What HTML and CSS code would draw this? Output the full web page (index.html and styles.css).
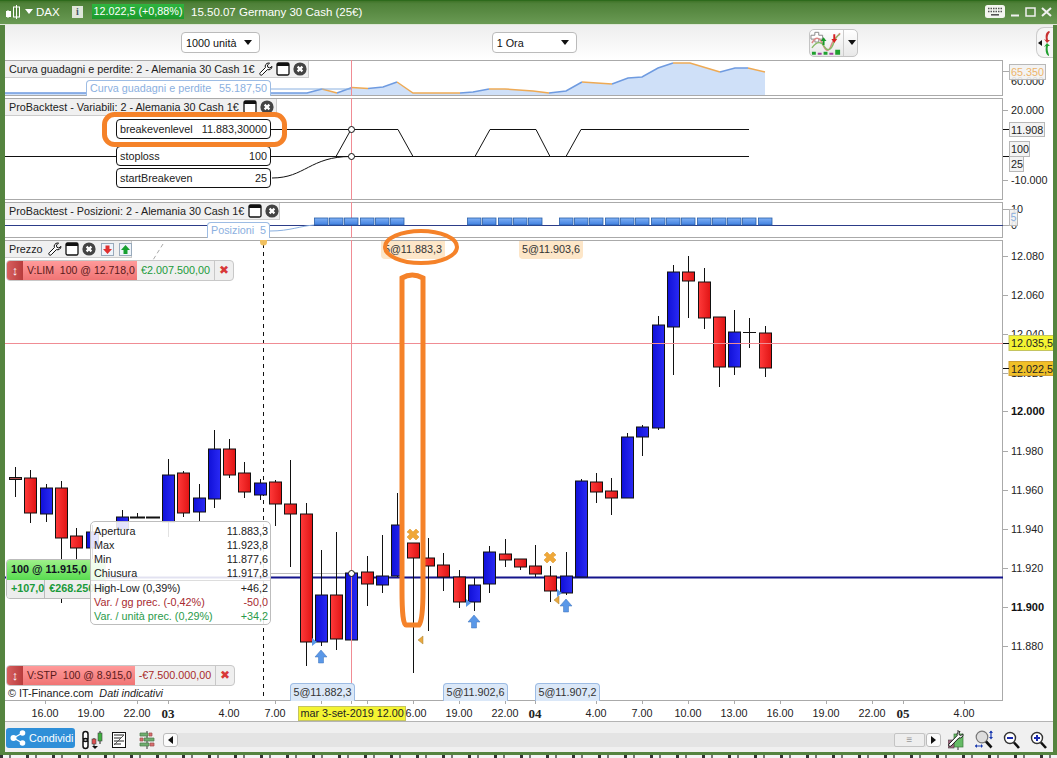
FILE: index.html
```html
<!DOCTYPE html>
<html lang="it">
<head>
<meta charset="utf-8">
<title>DAX</title>
<link rel="stylesheet" href="styles.css">
</head>
<body>
<svg class="defs" width="0" height="0" aria-hidden="true">
  <defs>
    <linearGradient id="r"><stop offset="0" stop-color="#ff3a3a"/><stop offset="1" stop-color="#e01414"/></linearGradient>
    <linearGradient id="b"><stop offset="0" stop-color="#1010d8"/><stop offset="1" stop-color="#2a2af4"/></linearGradient>
    <linearGradient id="bx" x1="0" y1="0" x2="0" y2="1"><stop offset="0" stop-color="#7fb0f4"/><stop offset="1" stop-color="#3f7fe0"/></linearGradient>
    <symbol id="wrench" viewBox="0 0 14 14"><path d="M9.6 1a3.4 3.4 0 0 0-3.2 4.6L1.2 10.8a1.4 1.4 0 0 0 2 2L8.4 7.6A3.4 3.4 0 0 0 13 4.4L10.8 6 8.8 5.2 8.4 3l2.2-1.8A3.4 3.4 0 0 0 9.6 1z" fill="#fff" stroke="#111" stroke-width="1"/></symbol>
    <symbol id="win" viewBox="0 0 14 14"><rect x="1" y="1" width="12" height="12" rx="1.5" fill="#fff" stroke="#111" stroke-width="1.3"/><rect x="1" y="1" width="12" height="3" fill="#111"/></symbol>
    <symbol id="close" viewBox="0 0 14 14"><circle cx="7" cy="7" r="6.6" fill="#444"/><path d="M4.6 4.6l4.8 4.8M9.4 4.6l-4.8 4.8" stroke="#fff" stroke-width="2.2"/></symbol>
  </defs>
</svg>
<div class="window">
  <header class="titlebar">
    <svg class="t-candle" width="16" height="16" viewBox="0 0 16 16"><path d="M3 6v8M11.5 1v14" stroke="#fff"/><rect x="1" y="7" width="5" height="6" fill="#fff"/><rect x="8.5" y="3" width="6" height="10" fill="none" stroke="#fff"/></svg>
    <span class="t-arrow"></span>
    <span class="t-name">DAX</span>
    <span class="t-info">i</span>
    <span class="t-price">12.022,5 (+0,88%)</span>
    <span class="t-text">15.50.07 Germany 30 Cash (25€)</span>
    <span class="t-right">
      <svg width="20" height="13" viewBox="0 0 20 13"><rect width="20" height="13" rx="2.5" fill="#f4f6f0"/><path d="M3 3.5h14M3 6.5h14" stroke="#555" stroke-width="1.6" stroke-dasharray="1.5 1"/><path d="M6 9.8h8" stroke="#555" stroke-width="1.6"/></svg>
      <svg width="10" height="10" viewBox="0 0 10 10"><path d="M1 8.5h8" stroke="#f0f0f0" stroke-width="2"/></svg>
      <svg width="11" height="10" viewBox="0 0 11 10"><rect x="1" y="1" width="9" height="8" fill="none" stroke="#f0f0f0" stroke-width="1.5"/></svg>
      <svg width="11" height="10" viewBox="0 0 11 10"><path d="M1 1l9 8M10 1l-9 8" stroke="#f0f0f0" stroke-width="2"/></svg>
    </span>
  </header>

  <main class="content">
    <div class="toolbar">
      <div class="select sel-units"><span>1000 unità</span><i class="caret"></i></div>
      <div class="select sel-tf"><span>1 Ora</span><i class="caret"></i></div>
      <div class="chartbtn">
        <svg width="34" height="26" viewBox="0 0 34 26">
          <path d="M5 2h4v3h4v4H9v3H5V9H1V5h4z" fill="#fff" stroke="#888"/>
          <path d="M2 13c5-9 9-4 12 3s6 5 8-1 6-9 9-12" fill="none" stroke="#d88"  stroke-width="1.6"/>
          <path d="M2 18c6-8 10-6 13-1s7 3 9-3 5-9 7-10" fill="none" stroke="#8b6" stroke-width="1.4"/>
          <path d="M13 15v-4h-2l3-4 3 4h-2v4z" fill="#1a9a2a"/><path d="M24 4v5h-2l3 4 3-4h-2V4z" fill="#d82020"/>
          <path d="M2 22h4v3H2zM14 22h4v3h-4zM26 20h5v5h-5z" fill="#20a030"/><path d="M8 23h4v2H8zM20 23h4v2h-4z" fill="#a040a0"/>
        </svg>
        <i class="caret caret-btn"></i>
      </div>
      <div class="sidetab">
        <svg width="14" height="30" viewBox="0 0 14 30"><path d="M1 15l4-3v6z" fill="#111"/><path d="M12 3c-3 1-4 4-3 9l-2-1 3 4 3-3-2 0c-1-3 0-6 2-8z" fill="#c83030"/><path d="M12 28c-3-1-4-5-3-10l-2 1 3-4 3 3-2 0c-1 3 0 6 1 9z" fill="#20a030"/></svg>
      </div>
    </div>

    <section class="panel panel-curve">
      <div class="plot">
        <svg class="canvas" width="998" height="36" viewBox="5 60 998 36">
          <path class="area" d="M5 95V93H307L322 89 337 93 352 87.500 368 88.500 383 87 397 82 413 93H460L473 92 489 89H505L533 91 549 93 566 91 582 82 612 84 628 78 642 77 658 68 673 63H690L720 72 735 68H748L765 72V95z"/>
          <path class="ln-blue" d="M5 93H307L322 89M337 93 352 87.500M368 88.500 383 87 397 82M460 93 473 92 489 89M549 93 566 91 582 82M612 84 628 78 642 77 658 68 673 63M720 72 735 68H748"/>
          <path class="ln-orange" d="M322 89 337 93M352 87.500 368 88.500M397 82 413 93H460M489 89H505L533 91 549 93M582 82 612 84M673 63H690L720 72M748 68 765 72"/>
          <path class="ln-thin" d="M271 89H352"/>
          <path class="cross" d="M351.500 60V96"/>
        </svg>
        <div class="head head-curve"><span>Curva guadagni e perdite: 2 - Alemania 30 Cash 1€</span>
          <svg class="ic"><use href="#wrench"/></svg><svg class="ic"><use href="#win"/></svg><svg class="ic"><use href="#close"/></svg></div>
        <div class="legend legend-curve"><span>Curva guadagni e perdite</span><span>55.187,50</span></div>
      </div>
      <div class="axis">
        <svg class="canvas" width="50" height="36" viewBox="1003 60 50 36">
          <text class="ax" x="1011" y="85">60.000</text>
          <path class="tick" d="M1003 71.500H1009"/>
          <rect class="boxl" x="1009.500" y="64.500" width="36" height="15"/>
          <text class="ax ax-o" x="1011" y="76">65.350</text>
        </svg>
      </div>
    </section>

    <section class="panel panel-vars">
      <div class="plot">
        <svg class="canvas" width="998" height="102" viewBox="5 98 998 102">
          <path class="cross" d="M351.500 98V200"/>
          <path class="ln-black" d="M5 156.500H749M270 129.500H398L413 156.500M475 156.500L490 129.500H536L550 156.500M566 156.500L581 129.500H749M336 156.500L351 129.500M272 178C305 178 310 156.500 351 156.500"/>
          <circle class="dot" cx="351.500" cy="129.500" r="3"/>
          <circle class="dot" cx="351.500" cy="156.500" r="3"/>
        </svg>
        <div class="head head-vars"><span>ProBacktest - Variabili: 2 - Alemania 30 Cash 1€</span>
          <svg class="ic"><use href="#win"/></svg><svg class="ic"><use href="#close"/></svg></div>
        <div class="var var-1"><span>breakevenlevel</span><span>11.883,30000</span></div>
        <div class="var var-2"><span>stoploss</span><span>100</span></div>
        <div class="var var-3"><span>startBreakeven</span><span>25</span></div>
      </div>
      <div class="axis">
        <svg class="canvas" width="50" height="102" viewBox="1003 98 50 102">
          <path class="tick" d="M1003 110.500H1008M1003 180.500H1008"/>
          <path class="tick-k" d="M1003 129.500H1009M1003 156.500H1009"/>
          <text class="ax" x="1011" y="114">20.000</text>
          <text class="ax" x="1011" y="184">-10.000</text>
          <rect class="boxl" x="1009.500" y="122.500" width="35" height="14"/>
          <text class="ax" x="1011" y="133.500">11.908</text>
          <rect class="boxl" x="1009.500" y="141.500" width="20" height="15"/>
          <text class="ax" x="1011" y="153">100</text>
          <rect class="boxl" x="1009.500" y="156.500" width="14" height="15"/>
          <text class="ax" x="1011" y="168">25</text>
        </svg>
      </div>
    </section>

    <section class="panel panel-pos">
      <div class="plot">
        <svg class="canvas" width="998" height="36" viewBox="5 202 998 36">
          <path class="cross" d="M351.500 202V238"/>
          <path class="ln-navy" d="M5 225.500H1003"/>
          <path class="ln-lb" d="M270 231C290 231 300 226 314 225"/>
          <g class="boxes" fill="url(#bx)">
            <rect x="314.500" y="218" width="13.500" height="7"/><rect x="329.500" y="218" width="13.500" height="7"/><rect x="344.500" y="218" width="13.500" height="7"/><rect x="360.500" y="218" width="13.500" height="7"/><rect x="375.500" y="218" width="13.500" height="7"/><rect x="390.500" y="218" width="13.500" height="7"/>
            <rect x="467.500" y="218" width="13.500" height="7"/><rect x="482.500" y="218" width="13.500" height="7"/><rect x="498.500" y="218" width="13.500" height="7"/><rect x="513.500" y="218" width="13.500" height="7"/><rect x="528.500" y="218" width="13.500" height="7"/>
            <rect x="559.500" y="218" width="13.500" height="7"/><rect x="574.500" y="218" width="13.500" height="7"/><rect x="589.500" y="218" width="13.500" height="7"/><rect x="605.500" y="218" width="13.500" height="7"/><rect x="620.500" y="218" width="13.500" height="7"/><rect x="635.500" y="218" width="13.500" height="7"/><rect x="651.500" y="218" width="13.500" height="7"/><rect x="666.500" y="218" width="13.500" height="7"/><rect x="681.500" y="218" width="13.500" height="7"/><rect x="697.500" y="218" width="13.500" height="7"/><rect x="712.500" y="218" width="13.500" height="7"/><rect x="727.500" y="218" width="13.500" height="7"/><rect x="742.500" y="218" width="13.500" height="7"/><rect x="758.500" y="218" width="13.500" height="7"/>
          </g>
        </svg>
        <div class="head head-pos"><span>ProBacktest - Posizioni: 2 - Alemania 30 Cash 1€</span>
          <svg class="ic"><use href="#win"/></svg><svg class="ic"><use href="#close"/></svg></div>
        <div class="legend legend-pos"><span>Posizioni</span><span>5</span></div>
      </div>
      <div class="axis">
        <svg class="canvas" width="50" height="36" viewBox="1003 202 50 36">
          <text class="ax" x="1011" y="213">10</text>
          <text class="ax" x="1011" y="229">0</text>
          <path class="tick" d="M1003 209.500H1009M1003 225.500H1009"/>
          <rect class="boxl" x="1009.500" y="209.500" width="8" height="16"/>
          <text class="ax ax-b" x="1010.500" y="221">5</text>
        </svg>
      </div>
    </section>

    <section class="panel panel-price">
      <div class="plot">
        <svg class="canvas" width="998" height="461" viewBox="5 240 998 461">
          <path class="dash-o" d="M163 244L153 260"/>
          <path class="dash-k" d="M263.500 244V700"/>
          <path class="ln-level" d="M5 577.500H1003"/>
          <path class="ln-gray" d="M270 573.500H351"/>
          <path class="wick" d="M15.500 467V497M30.500 470V523M46.500 484V522M61.500 481V603M76.500 528V559M92.500 525V560M122.500 510V520M137.500 513V518M168.500 459V537M183.500 471V517M199.500 484V521M214.500 430V508M229.500 439V478M244.500 462V498M260.500 479V500M275.500 480V526M290.500 460V567M306.500 503V666M321.500 550V646M336.500 532V650M351.500 562V652M367.500 556V606M382.500 535V593M397.500 493V577M413.500 543V673M428.500 538V631M443.500 553V591M459.500 570V608M474.500 578V611M489.500 546V593M505.500 539V567M520.500 559V570M535.500 545V577M550.500 566V602M566.500 552V595M581.500 479V577M596.500 473V503M611.500 478V515M627.500 433V498M642.500 425V456M658.500 316V430M673.500 265V375M688.500 256V318M704.500 268V329M719.500 317V387M734.500 310V375M749.500 318V348M765.500 326V377M743 332.500H756"/>
          <path class="flat" d="M130 517.500H145M146 517.500H160"/>
          <g class="body" fill="url(#r)">
            <rect x="24.500" y="478" width="12" height="35"/><rect x="55.500" y="488" width="12" height="50"/><rect x="70.500" y="536" width="12" height="12"/><rect x="177.500" y="473" width="12" height="40"/><rect x="223.500" y="449" width="12" height="26"/><rect x="238.500" y="473" width="12" height="19"/><rect x="269.500" y="482" width="12" height="22"/><rect x="284.500" y="504" width="12" height="10"/><rect x="300.500" y="514" width="12" height="128"/><rect x="330.500" y="595" width="12" height="44"/><rect x="361.500" y="572" width="12" height="12"/><rect x="407.500" y="543" width="12" height="15"/><rect x="422.500" y="558" width="12" height="8"/><rect x="437.500" y="565" width="12" height="12"/><rect x="453.500" y="577" width="12" height="25"/><rect x="499.500" y="554" width="12" height="6"/><rect x="514.500" y="559" width="12" height="8"/><rect x="529.500" y="566" width="12" height="8"/><rect x="544.500" y="576" width="12" height="15"/><rect x="590.500" y="482" width="12" height="10"/><rect x="605.500" y="491" width="12" height="7"/><rect x="682.500" y="272" width="12" height="9"/><rect x="698.500" y="282" width="12" height="36"/><rect x="713.500" y="317" width="12" height="50"/><rect x="759.500" y="333" width="12" height="35"/>
          </g>
          <rect class="body-doji" x="9.500" y="477.500" width="12" height="2"/>
          <g class="body" fill="url(#b)">
            <rect x="40.500" y="488" width="12" height="26"/><rect x="86.500" y="532" width="12" height="16"/><rect x="116.500" y="517" width="12" height="12"/><rect x="162.500" y="475" width="12" height="47"/><rect x="193.500" y="498" width="12" height="14"/><rect x="208.500" y="449" width="12" height="50"/><rect x="254.500" y="483" width="12" height="12"/><rect x="315.500" y="595" width="12" height="47"/><rect x="345.500" y="573" width="12" height="67"/><rect x="376.500" y="576" width="12" height="9"/><rect x="391.500" y="525" width="12" height="51"/><rect x="468.500" y="585" width="12" height="17"/><rect x="483.500" y="552" width="12" height="32"/><rect x="560.500" y="576" width="12" height="17"/><rect x="575.500" y="481" width="12" height="96"/><rect x="621.500" y="437" width="12" height="61"/><rect x="636.500" y="427" width="12" height="10"/><rect x="652.500" y="325" width="12" height="103"/><rect x="667.500" y="272" width="12" height="55"/><rect x="728.500" y="332" width="12" height="35"/>
          </g>
          <path class="cross" d="M351.500 240V700M5 343.500H1003"/>
          <circle class="dot" cx="351.500" cy="573.500" r="3"/>
          <path class="m-up" d="M321 650l6 7h-3.500v6h-5v-6H315zM474 615l6 7h-3.500v6h-5v-6H468zM566 599l6 7h-3.500v6h-5v-6H560z"/>
          <path class="m-x" d="M410 529l3 3 3-3 3 3-3 2 3 3-3 3-3-3-3 3-3-3 3-3-3-2zM547 552l3 3 3-3 3 3-3 2 3 3-3 3-3-3-3 3-3-3 3-3-3-2z"/>
          <path class="m-tri-b" d="M312 638l5 4-5 4zM466 599l5 4-5 4zM557 589l5 4-5 4z"/>
          <path class="m-tri-o" d="M423 636l-5 4 5 4zM559 596l-5 4 5 4z"/>
          <path class="m-pin" d="M260 240h7v2a3.500 3.500 0 0 1-7 0z"/>
        </svg>
        <div class="head head-price"><span>Prezzo</span>
          <svg class="ic"><use href="#wrench"/></svg><svg class="ic"><use href="#win"/></svg><svg class="ic"><use href="#close"/></svg>
          <svg class="ic-sq" viewBox="0 0 13 13"><rect x=".5" y=".5" width="12" height="12" fill="#eef4fb" stroke="#9ab"/><path d="M4.500 2.500h4v3.500H11l-4.500 5L2 6h2.500z" fill="#e03030"/></svg>
          <svg class="ic-sq" viewBox="0 0 13 13"><rect x=".5" y=".5" width="12" height="12" fill="#eef4fb" stroke="#9ab"/><path d="M4.500 11h4V7H11L6.500 2 2 7h2.500z" fill="#16a030"/></svg>
        </div>

        <div class="order order-lim"><span class="o-grip">↕</span><span class="o-main o-main-lim">V:LIM&nbsp; 100 @ 12.718,0</span><span class="o-val o-val-g">€2.007.500,00</span><span class="o-x">✖</span></div>
        <div class="order order-stp"><span class="o-grip">↕</span><span class="o-main o-main-stp">V:STP&nbsp; 100 @ 8.915,0</span><span class="o-val o-val-r">-€7.500.000,00</span><span class="o-x">✖</span></div>

        <div class="pos-tag">
          <div class="pos-head">100 @ 11.915,0</div>
          <div class="pos-row"><span>+107,0</span><span>€268.250,00</span></div>
        </div>

        <div class="tip">
          <div class="tip-row"><span>Apertura</span><span>11.883,3</span></div>
          <div class="tip-row"><span>Max</span><span>11.923,8</span></div>
          <div class="tip-row"><span>Min</span><span>11.877,6</span></div>
          <div class="tip-row"><span>Chiusura</span><span>11.917,8</span></div>
          <div class="tip-sep"></div>
          <div class="tip-row"><span>High-Low (0,39%)</span><span>+46,2</span></div>
          <div class="tip-row tip-red"><span>Var. / gg prec. (-0,42%)</span><span>-50,0</span></div>
          <div class="tip-row tip-green"><span>Var. / unità prec. (0,29%)</span><span>+34,2</span></div>
        </div>

        <div class="mark-top mark-1">5@11.883,3</div>
        <div class="mark-top mark-2">5@11.903,6</div>
        <div class="mark-bot mark-3">5@11.882,3</div>
        <div class="mark-bot mark-4">5@11.902,6</div>
        <div class="mark-bot mark-5">5@11.907,2</div>
        <div class="copyright">© IT-Finance.com&nbsp; <em>Dati indicativi</em></div>
      </div>
      <div class="axis">
        <svg class="canvas" width="50" height="461" viewBox="1003 240 50 461">
          <path class="tick" d="M1003 256.500H1008M1003 295.500H1008M1003 334.500H1008M1003 373.500H1008M1003 411.500H1008M1003 451.500H1008M1003 490.500H1008M1003 529.500H1008M1003 568.500H1008M1003 607.500H1008M1003 646.500H1008"/>
          <text class="ax" x="1011" y="260">12.080</text>
          <text class="ax" x="1011" y="299">12.060</text>
          <text class="ax" x="1011" y="338">12.040</text>
          <text class="ax" x="1011" y="377">12.020</text>
          <text class="ax ax-strong" x="1011" y="415">12.000</text>
          <text class="ax" x="1011" y="455">11.980</text>
          <text class="ax" x="1011" y="494">11.960</text>
          <text class="ax" x="1011" y="533">11.940</text>
          <text class="ax" x="1011" y="572">11.920</text>
          <text class="ax ax-strong" x="1011" y="611">11.900</text>
          <text class="ax" x="1011" y="650">11.880</text>
          <rect class="b-cross" x="1009" y="335.500" width="46" height="15"/>
          <text class="ax" x="1011" y="347">12.035,5</text>
          <rect class="b-last" x="1009" y="361.500" width="46" height="14"/>
          <text class="ax" x="1011" y="372.500">12.022,5</text>
          <path class="tick-k" d="M1003 343.500H1009M1003 368.500H1009"/>
        </svg>
      </div>
    </section>

    <div class="xaxis">
      <svg class="canvas-x" width="1048" height="21" viewBox="5 701 1048 21">
        <path class="tick" d="M45.500 701V704M91.500 701V704M137.500 701V704M168.500 701V704M229.500 701V704M275.500 701V704M321.500 701V704M351.500 701V704M367.500 701V704M413.500 701V704M459.500 701V704M505.500 701V704M535.500 701V704M596.500 701V704M642.500 701V704M688.500 701V704M734.500 701V704M780.500 701V704M826.500 701V704M872.500 701V704M903.500 701V704M964.500 701V704"/>
        <g class="xl">
          <text x="45" y="717">16.00</text><text x="91" y="717">19.00</text><text x="137" y="717">22.00</text><text class="xl-day" x="168" y="718">03</text><text x="229" y="717">4.00</text><text x="275" y="717">7.00</text>
          <text x="413" y="717">16.00</text><text x="459" y="717">19.00</text><text x="505" y="717">22.00</text><text class="xl-day" x="535" y="718">04</text><text x="596" y="717">4.00</text><text x="642" y="717">7.00</text><text x="688" y="717">10.00</text><text x="734" y="717">13.00</text><text x="780" y="717">16.00</text><text x="826" y="717">19.00</text><text x="872" y="717">22.00</text><text class="xl-day" x="903" y="718">05</text><text x="964" y="717">4.00</text>
        </g>
        <rect class="b-cross" x="298.500" y="706.500" width="107" height="14"/>
        <text class="ax" x="300.500" y="717">mar 3-set-2019 12.00</text>
      </svg>
    </div>

    <div class="bottombar">
      <button class="share"><svg width="16" height="16" viewBox="0 0 16 16"><circle cx="3.500" cy="8" r="3" fill="#fff"/><circle cx="12.500" cy="3" r="2.800" fill="#fff"/><circle cx="12.500" cy="13" r="2.800" fill="#fff"/><path d="M3.500 8l9-5M3.500 8l9 5" stroke="#fff" stroke-width="1.400"/></svg><span>Condividi</span></button>
      <svg class="b1" width="24" height="20" viewBox="0 0 24 20">
        <path d="M3 4a2.500 2.500 0 0 1 5 0v5a2.500 2.500 0 0 1-5 0zM3 11a2.500 2.500 0 0 1 5 0v5a2.500 2.500 0 0 1-5 0z" fill="#fff" stroke="#111" stroke-width="1.500"/>
        <path d="M14 8v8M20 1v13" stroke="#222"/><rect x="12" y="9" width="4" height="5" fill="#e05050" stroke="#444" stroke-width=".6"/><rect x="18" y="3" width="4" height="8" fill="#40b040" stroke="#444" stroke-width=".6"/><path d="M12 16l3 3 3-3z" fill="#111"/>
      </svg>
      <svg class="b2" width="14" height="16" viewBox="0 0 14 16"><rect x=".5" y=".5" width="13" height="15" fill="#fff" stroke="#111"/><path d="M2 3h10M2 6h7M2 9h10M2 12h7" stroke="#222" stroke-width="1.200"/><path d="M2 13L12 3" stroke="#555"/></svg>
      <svg class="b3" width="16" height="18" viewBox="0 0 16 18"><path d="M8 0v18" stroke="#333"/><path d="M1 2h8v3H1zM5 7h10v3H5zM1 12h9v3H1z" fill="#6fae6f" stroke="#4a7a4a" stroke-width=".7"/><path d="M10 2h3v3h-3zM1 7h3v3H1zM11 12h4v3h-4z" fill="#d87070" stroke="#a04a4a" stroke-width=".7"/></svg>
      <div class="scroll">
        <span class="s-btn"><i class="tri-l"></i></span>
        <span class="s-track"><span class="s-thumb">≡</span></span>
        <span class="s-btn"><i class="tri-r"></i></span>
      </div>
      <svg class="b4" width="16" height="20" viewBox="0 0 16 20"><path d="M10 0v20" stroke="#333"/><rect x="6" y="4" width="9" height="13" fill="#66bb66" stroke="#3a7a3a" stroke-width=".7"/><rect x="0" y="10" width="6" height="8" fill="#a06a80" stroke="#444" stroke-width=".6"/><path d="M12 1.500a3 3 0 0 0-2.800 4L1 14a1.300 1.300 0 0 0 2 2l8-8.200a3 3 0 0 0 3.800-3.800l-2 1.500-1.600-.7-.2-1.800z" fill="#fff" stroke="#222"/></svg>
      <svg class="b5" width="18" height="20" viewBox="0 0 18 20"><circle cx="7" cy="7" r="5.800" fill="#ddd" stroke="#777" stroke-width="1.200"/><path d="M11 11.500l5.500 6" stroke="#111" stroke-width="2.600"/><path d="M16 1v7M0 16h7" stroke="#1a3ab0" stroke-width="1.200"/><path d="M14 3l2-2.500L18 3zM14 7l2 2.500L18 7zM2 14l-2 2 2 2zM6 14l2 2-2 2z" fill="#1a3ab0"/></svg>
      <svg class="b6" width="17" height="18" viewBox="0 0 17 18"><circle cx="7" cy="7" r="5.500" fill="#fff" stroke="#333" stroke-width="1.400"/><path d="M11 11.500l5 5.500" stroke="#111" stroke-width="2.600"/><path d="M4 7h6" stroke="#1a2ab0" stroke-width="2"/></svg>
      <svg class="b6" width="17" height="18" viewBox="0 0 17 18"><circle cx="7" cy="7" r="5.500" fill="#fff" stroke="#333" stroke-width="1.400"/><path d="M11 11.500l5 5.500" stroke="#111" stroke-width="2.600"/><path d="M4 7h6M7 4v6" stroke="#1a2ab0" stroke-width="2"/></svg>
    </div>
  </main>
  <div class="bottomstrip"></div>

  <svg class="notes" width="1057" height="758" viewBox="0 0 1057 758" aria-hidden="true">
    <rect x="104.500" y="114.500" width="180" height="30" rx="10"/>
    <ellipse cx="421" cy="247" rx="36" ry="16"/>
    <path d="M402 278V590Q402 625 406 625H419Q423 620 423 590V278Q412 272 402 278z"/>
  </svg>
</div>
</body>
</html>
```

FILE: styles.css
```css
* { box-sizing: border-box; }
html, body { margin: 0; padding: 0; }
body { background: #fff; font-family: "Liberation Sans", Arial, sans-serif; font-size: 10.800px; color: #222; overflow: hidden; }
.defs { position: absolute; }

.window { position: relative; width: 1057px; height: 758px; display: flex; flex-direction: column; overflow: hidden; background: #55843f; }

/* title bar */
.titlebar { height: 25px; flex: none; display: flex; align-items: center; padding: 0 5px 2px 5px; color: #fff; font-size: 11.500px; background: linear-gradient(#3f7428, #4f8139 12%, #6a9a54); border-top: 1px solid #2d6a1c; border-bottom: 1px solid #dfe8d8; }
.t-candle { flex: none; }
.t-arrow { margin-left: 4px; border: 4px solid transparent; border-top: 5px solid #fff; border-bottom: 0; }
.t-name { margin-left: 3px; width: 36px; }
.t-info { width: 11px; height: 12px; background: #dfe6da; color: #456; font: bold 10px/12px "Liberation Serif", serif; text-align: center; }
.t-price { margin-left: 9px; width: 92px; height: 15px; font-size: 10.800px; line-height: 15px; background: linear-gradient(#2fb53f, #1c9a2c); text-align: center; white-space: nowrap; }
.t-text { margin-left: 7px; white-space: nowrap; }
.t-right { margin-left: auto; display: flex; align-items: center; gap: 5px; }

/* content */
.content { flex: none; width: 1048px; margin-left: 5px; background: #fff; display: flex; flex-direction: column; }

.toolbar { height: 35px; flex: none; display: flex; align-items: center; background: linear-gradient(#eee, #fff); }
.select { height: 21px; display: flex; align-items: center; justify-content: space-between; padding: 0 7px 0 4px; background: #fff; border: 1px solid #bbb; border-radius: 4px; color: #111; }
.sel-units { width: 79px; margin-left: 176px; }
.sel-tf { width: 86px; margin-left: 232px; }
.caret { width: 0; height: 0; border: 4.500px solid transparent; border-top: 5px solid #111; border-bottom: 0; }
.chartbtn { width: 49px; height: 28px; margin-left: 232px; display: flex; align-items: center; border: 1px solid #c4c4c4; border-radius: 5px; background: linear-gradient(#fff, #e8e8e8); }
.chartbtn svg { border-right: 1px solid #ccc; flex: none; }
.caret-btn { margin-left: 4px; }
.sidetab { width: 17px; height: 31px; margin-left: 178px; border: 1px solid #ccc; border-right: 0; border-radius: 8px 0 0 8px; background: #f6f6f6; }
.sidetab svg { display: block; }

.panel { display: grid; grid-template-columns: 998px 50px; flex: none; margin-bottom: 2px; }
.panel-curve { height: 36px; }
.panel-vars { height: 102px; }
.panel-pos { height: 36px; }
.panel-price { height: 461px; margin-bottom: 0; }
.plot { position: relative; overflow: hidden; box-shadow: inset -1px 0 #aaa, inset 0 1px #aaa, inset 0 -1px #aaa; }
.axis { position: relative; overflow: hidden; }
.canvas { position: absolute; left: 0; top: 0; display: block; }

/* svg strokes */
.ln-blue, .ln-orange, .ln-thin, .cross, .ln-black, .ln-navy, .ln-lb, .dash-o, .dash-k, .ln-level, .ln-gray, .wick, .flat, .tick, .tick-k { fill: none; }
.area { fill: #cfe0f8; }
.ln-blue { stroke: #6f9be0; stroke-width: 1.500; }
.ln-orange { stroke: #eeaa55; stroke-width: 1.500; }
.ln-thin { stroke: #8ab0e0; stroke-width: 1; }
.cross { stroke: #f08c94; stroke-width: 1; }
.ln-black { stroke: #111; stroke-width: 1; }
.dot { fill: #fff; stroke: #111; stroke-width: 1; }
.ln-navy { stroke: #2c3c88; stroke-width: 1; }
.ln-lb { stroke: #8ab0e0; stroke-width: 1; }
.boxes rect { stroke: #2a5fa8; stroke-width: .8; }
.dash-o { stroke: #aaa; stroke-width: 1; stroke-dasharray: 4 3; }
.dash-k { stroke: #111; stroke-width: 1; stroke-dasharray: 4 4; }
.ln-level { stroke: #14148c; stroke-width: 2; }
.ln-gray { stroke: #bbb; stroke-width: 1; }
.wick { stroke: #111; stroke-width: 1; }
.flat { stroke: #111; stroke-width: 2; }
.body rect { stroke: #111; stroke-width: 1; }
.body-doji { fill: #b05050; stroke: #111; stroke-width: 1; }
.m-up { fill: #5a98e8; stroke: #3c70b8; stroke-width: .5; }
.m-x { fill: #f0a838; stroke: #d89020; stroke-width: .5; }
.m-tri-b { fill: #5a98e8; }
.m-tri-o { fill: #e8a840; stroke: #a88030; stroke-width: .5; }
.m-pin { fill: #f0c060; }
.tick { stroke: #aaa; stroke-width: 1; }
.tick-k { stroke: #111; stroke-width: 1; }
.ax { font-family: "Liberation Sans", Arial, sans-serif; font-size: 10.800px; fill: #222; }
.ax-strong { font-size: 11px; font-weight: bold; fill: #111; }
.ax-o { fill: #edb46a; }
.ax-b { fill: #8aaedc; }
.boxl { fill: #f2f2f2; stroke: #b8b8b8; stroke-width: 1; fill-opacity: .9; }
.b-cross { fill: #f4f432; stroke: #c4c460; stroke-width: 1; }
.b-last { fill: #f0c028; stroke: #d0a030; stroke-width: 1; }
.xl text { font-family: "Liberation Sans", Arial, sans-serif; font-size: 10.800px; fill: #222; text-anchor: middle; }
.xl .xl-day { font-family: "Liberation Serif", serif; font-size: 13px; font-weight: bold; }

/* panel headers */
.head { position: absolute; left: 0; top: 1px; height: 17px; display: flex; align-items: center; gap: 3px; padding-left: 4px; background: #f0f0f0; border: 1px solid #ccc; border-left: 0; border-top: 0; color: #222; white-space: nowrap; }
.head-curve { width: 304px; }
.head-vars { width: 272px; }
.head-pos { width: 275px; }
.head-price { width: 127px; gap: 3px; }
.head span { margin-right: 1px; }
.head-price span { margin-right: 2px; }
.ic { width: 14px; height: 14px; flex: none; }
.ic-sq { width: 13px; height: 13px; flex: none; margin-left: 2px; }

/* legend boxes */
.legend { position: absolute; display: flex; justify-content: space-between; background: #fff; color: #8bb0e0; border: 1px solid #9dbce4; border-bottom: 0; border-radius: 4px 4px 0 0; padding: 0 3px; line-height: 15px; white-space: nowrap; }
.legend-curve { left: 81px; top: 20px; width: 185px; height: 16px; }
.legend-pos { left: 202px; top: 20px; width: 63px; height: 16px; }

.var { position: absolute; left: 111px; width: 155px; height: 20px; display: flex; justify-content: space-between; align-items: center; padding: 0 3px; background: #fff; border: 1px solid #111; border-radius: 4px; color: #222; }
.var-1 { top: 21px; }
.var-2 { top: 48px; }
.var-3 { top: 70px; }

/* orders */
.order { position: absolute; left: 1px; height: 21px; display: flex; align-items: stretch; font-size: 10.500px; line-height: 19px; white-space: nowrap; border: 1px solid #c8c8c8; border-radius: 4px; overflow: hidden; background: #efefef; }
.order-lim { top: 20px; width: 228px; }
.order-stp { top: 425px; width: 229px; }
.o-grip { width: 16px; background: linear-gradient(90deg, #d86060, #b83c3c); color: #fff; font-weight: bold; text-align: center; font-size: 13px; flex: none; }
.o-main { background: linear-gradient(#ff9a9a, #f07474); color: #5a1a1a; padding-left: 4px; flex: none; }
.o-main-lim { width: 114px; }
.o-main-stp { width: 112px; }
.o-val { flex: none; text-align: center; border-right: 1px solid #c8c8c8; font-size: 10.800px; }
.o-main-lim + .o-val { width: 78px; }
.o-main-stp + .o-val { width: 81px; }
.o-val-g { color: #1a9a3a; }
.o-val-r { color: #a82a2a; }
.o-x { flex: 1; text-align: center; color: #d83838; font-size: 12px; }

.pos-tag { position: absolute; left: 1px; top: 319px; width: 100px; border: 1px solid #bbb; border-radius: 4px; overflow: hidden; white-space: nowrap; }
.pos-head { height: 20px; line-height: 19px; padding-left: 4px; background: linear-gradient(#9ef08a, #58dc50); font-weight: bold; color: #112; }
.pos-row { height: 18px; line-height: 17px; background: #ededed; color: #1a9a3a; display: flex; font-weight: bold; }
.pos-row span:first-child { width: 42px; padding-left: 4px; border-right: 1px solid #bbb; }
.pos-row span:last-child { padding-left: 4px; }

.tip { position: absolute; left: 85px; top: 281px; width: 181px; height: 104px; padding: 2px 2px 0 3px; background: rgba(255,255,255,.88); border: 1px solid #bdbdbd; border-radius: 5px; }
.tip-row { display: flex; justify-content: space-between; height: 14px; line-height: 14px; color: #222; white-space: nowrap; }
.tip-sep { height: 1px; margin: 0 -2px 0 -3px; background: #ddd; }
.tip-red { color: #a82a30; }
.tip-green { color: #2a9a4a; }

.mark-top, .mark-bot { position: absolute; height: 18px; line-height: 17px; text-align: center; white-space: nowrap; color: #333; }
.mark-top { top: 1px; width: 64px; background: #fde6c8; border-radius: 0 0 4px 4px; }
.mark-1 { left: 376px; }
.mark-2 { left: 514px; }
.mark-bot { top: 443px; width: 65px; background: #dbe8f8; border: 1px solid #9dbce4; border-bottom: 0; border-radius: 4px 4px 0 0; }
.mark-3 { left: 285px; }
.mark-4 { left: 438px; }
.mark-5 { left: 530px; }
.copyright { position: absolute; left: 3px; top: 447px; color: #222; white-space: nowrap; }

/* x axis + bottom */
.xaxis { height: 21px; flex: none; border-bottom: 1px solid #b4b4b4; }
.canvas-x { display: block; }
.bottombar { height: 30px; flex: none; display: flex; align-items: center; padding-top: 6px; background: #f0f0f0; }
.share { width: 69px; height: 20px; margin: 0 0 4px 1px; padding: 0 0 0 4px; display: flex; align-items: center; gap: 3px; border: 0; border-radius: 3px; background: #2f8fd8; color: #fff; font: 10.800px "Liberation Sans", Arial, sans-serif; }
.b1 { margin-left: 5px; }
.b2 { margin-left: 8px; }
.b3 { margin-left: 13px; }
.scroll { width: 778px; height: 14px; margin-left: 8px; display: flex; flex: none; }
.s-btn { width: 15px; flex: none; display: flex; align-items: center; justify-content: center; background: #fbfbfb; border: 1px solid #bbb; border-radius: 3px; }
.s-track { flex: 1; display: flex; justify-content: flex-end; background: #e4e4e4; }
.s-thumb { width: 31px; text-align: center; font-size: 10px; line-height: 11px; color: #999; background: #eee; border: 1px solid #c4c4c4; border-radius: 2px; margin-right: 1px; }
.tri-l, .tri-r { width: 0; height: 0; border: 4px solid transparent; }
.tri-l { border-right: 5px solid #111; border-left: 0; }
.tri-r { border-left: 5px solid #111; border-right: 0; }
.b4 { margin-left: 7px; }
.b5 { margin-left: 11px; }
.b6 { margin-left: 10px; }

.bottomstrip { height: 3px; margin-top: 3px; background: repeating-linear-gradient(90deg, #333 0 3px, #f4f4f4 3px 9px, #777 9px 11px, #f4f4f4 11px 26px); flex: none; }

.notes { position: absolute; left: 0; top: 0; pointer-events: none; }
.notes rect, .notes ellipse, .notes path { fill: none; stroke: #f58229; stroke-width: 5; }
.notes ellipse { stroke-width: 4; }
```
